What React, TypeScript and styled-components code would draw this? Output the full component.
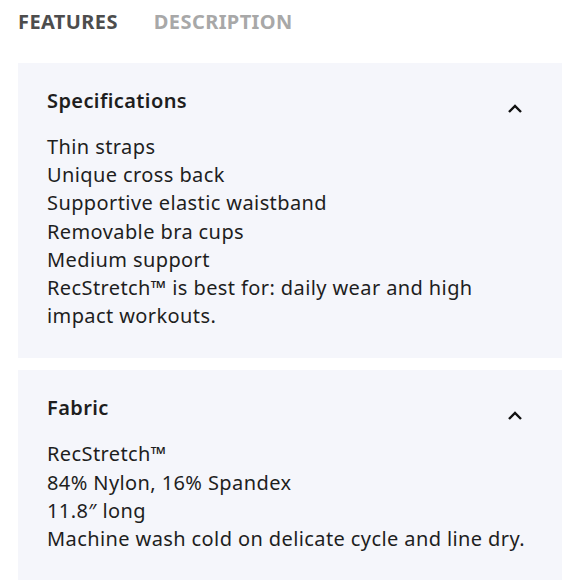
import styled, { createGlobalStyle } from "styled-components";

const GlobalStyle = createGlobalStyle`
  body {
    margin: 0;
    background: #ffffff;
    font-family: "Noto Sans", "Liberation Sans", sans-serif;
  }
`;

const Page = styled.div`
  width: 580px;
  padding: 8px 18px 0;
  box-sizing: border-box;
`;

const Tabs = styled.div`
  display: flex;
  gap: 36px;
  height: 43px;
  align-items: flex-start;
  margin-bottom: 12px;
`;

const Tab = styled.div<{ $active?: boolean }>`
  font-size: 20px;
  font-weight: 700;
  letter-spacing: 0.4px;
  line-height: 28px;
  color: ${(p) => (p.$active ? "#4d4d4d" : "#a8a8a8")};
`;

const Card = styled.section`
  background: #f5f6fb;
  padding: 24px 29px 28px;
  margin-bottom: 12px;
`;

const CardHead = styled.div`
  display: flex;
  justify-content: space-between;
  align-items: flex-start;
  margin-bottom: 18px;
`;

const CardTitle = styled.h3`
  margin: 0;
  font-size: 20px;
  font-weight: 600;
  letter-spacing: 0.4px;
  line-height: 28px;
  color: #1e1e1e;
`;

const Chevron = styled.svg`
  width: 16px;
  height: 10px;
  margin: 17px 10px 0 0;
`;

const Lines = styled.div`
  font-size: 20px;
  letter-spacing: 0.4px;
  line-height: 28.2px;
  color: #1e1e1e;
`;

const Line = styled.div``;

function Section({ title, lines }: { title: string; lines: string[] }) {
  return (
    <Card>
      <CardHead>
        <CardTitle>{title}</CardTitle>
        <Chevron viewBox="0 0 16 10">
          <path d="M2 8 L8 2 L14 8" fill="none" stroke="#111" strokeWidth="2.4" />
        </Chevron>
      </CardHead>
      <Lines>
        {lines.map((l, i) => (
          <Line key={i}>{l}</Line>
        ))}
      </Lines>
    </Card>
  );
}

export default function App() {
  return (
    <>
      <GlobalStyle />
      <Page>
        <Tabs>
          <Tab $active>FEATURES</Tab>
          <Tab>DESCRIPTION</Tab>
        </Tabs>
        <Section
          title="Specifications"
          lines={[
            "Thin straps",
            "Unique cross back",
            "Supportive elastic waistband",
            "Removable bra cups",
            "Medium support",
            "RecStretch™ is best for: daily wear and high impact workouts.",
          ]}
        />
        <Section
          title="Fabric"
          lines={[
            "RecStretch™",
            "84% Nylon, 16% Spandex",
            "11.8″ long",
            "Machine wash cold on delicate cycle and line dry.",
          ]}
        />
      </Page>
    </>
  );
}
